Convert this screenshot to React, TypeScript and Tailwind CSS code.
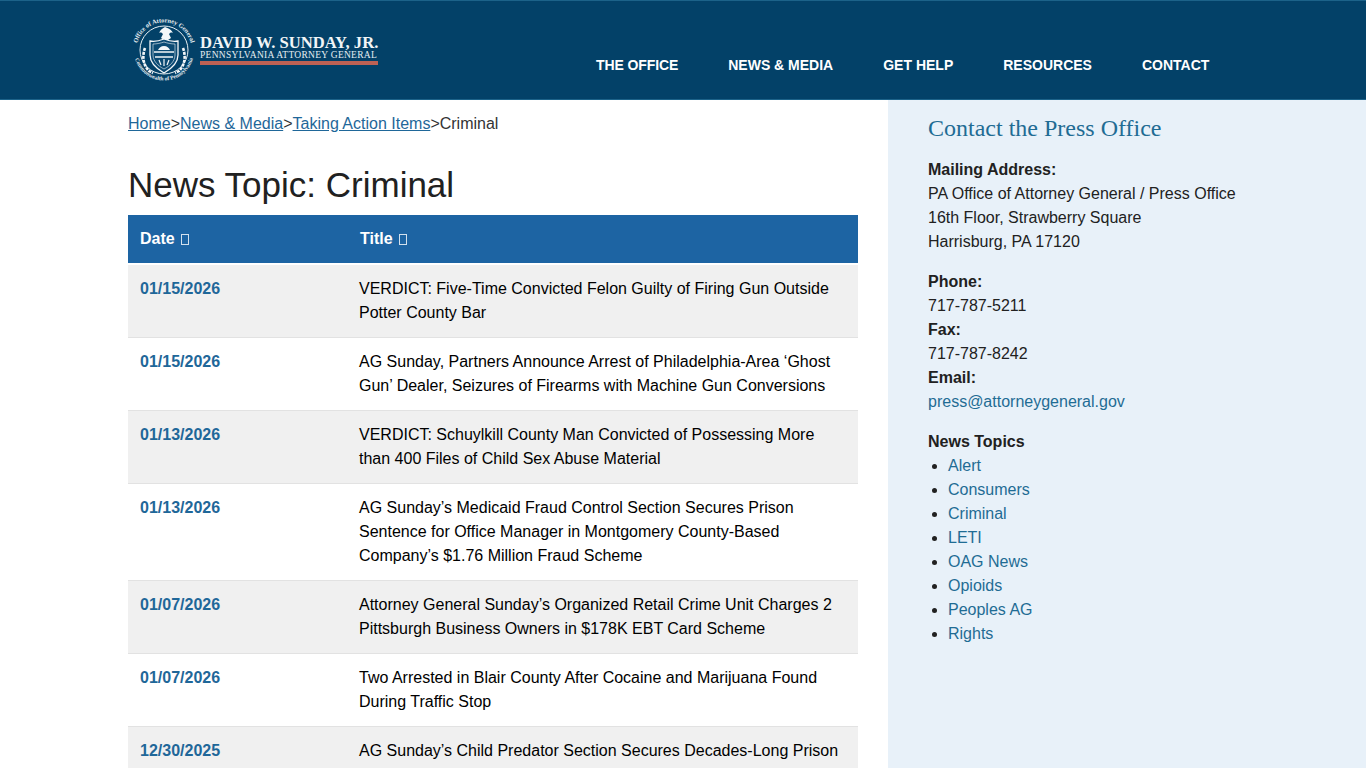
const navItems = ["THE OFFICE", "NEWS & MEDIA", "GET HELP", "RESOURCES", "CONTACT"];

const rows = [
  { date: "01/15/2026", title: ["VERDICT: Five-Time Convicted Felon Guilty of Firing Gun Outside", "Potter County Bar"] },
  { date: "01/15/2026", title: ["AG Sunday, Partners Announce Arrest of Philadelphia-Area ‘Ghost", "Gun’ Dealer, Seizures of Firearms with Machine Gun Conversions"] },
  { date: "01/13/2026", title: ["VERDICT: Schuylkill County Man Convicted of Possessing More", "than 400 Files of Child Sex Abuse Material"] },
  { date: "01/13/2026", title: ["AG Sunday’s Medicaid Fraud Control Section Secures Prison", "Sentence for Office Manager in Montgomery County-Based", "Company’s $1.76 Million Fraud Scheme"] },
  { date: "01/07/2026", title: ["Attorney General Sunday’s Organized Retail Crime Unit Charges 2", "Pittsburgh Business Owners in $178K EBT Card Scheme"] },
  { date: "01/07/2026", title: ["Two Arrested in Blair County After Cocaine and Marijuana Found", "During Traffic Stop"] },
  { date: "12/30/2025", title: ["AG Sunday’s Child Predator Section Secures Decades-Long Prison"] },
];

const topics = ["Alert", "Consumers", "Criminal", "LETI", "OAG News", "Opioids", "Peoples AG", "Rights"];

const Seal = () => (
  <svg width="64" height="64" viewBox="0 0 64 64" fill="none" className="shrink-0">
    <defs>
      <path id="sealTop" d="M5 38 A27.5 27.5 0 1 1 59 38" />
      <path id="sealBottom" d="M2.5 39 A30 30 0 0 0 61.5 39" />
    </defs>
    <text fontSize="6.4" fontWeight="700" fill="#e6eef2" fontFamily="'Liberation Serif', serif">
      <textPath href="#sealTop" startOffset="50%" textAnchor="middle">Office of Attorney General</textPath>
    </text>
    <text fontSize="5.6" fontWeight="700" fill="#e6eef2" fontFamily="'Liberation Serif', serif">
      <textPath href="#sealBottom" startOffset="50%" textAnchor="middle">Commonwealth of Pennsylvania</textPath>
    </text>
    <circle cx="32" cy="33" r="24" stroke="#e6eef2" strokeWidth="1" />
    {/* eagle */}
    <path d="M33 10c-2 1-5 3-6 6 2-1 3 0 4 1l-2 4 3 2h4l3-2-2-4c1-1 2-2 4-1-1-3-5-5-8-6z" fill="#f4f7f9" />
    {/* shield */}
    <path d="M18 24c5 1 9 0 14-2 5 2 9 3 14 2v14c0 8-7 14-14 18-7-4-14-10-14-18V24z" fill="#0b4a73" stroke="#f4f7f9" strokeWidth="1.3" />
    <path d="M21 27c4 0 8-1 11-2 3 1 7 2 11 2v11c0 6-5 11-11 14-6-3-11-8-11-14V27z" stroke="#f4f7f9" strokeWidth="0.6" />
    <path d="M26 33c1-2 3-4 6-4s5 2 6 4z" fill="#f4f7f9" />
    <path d="M22 35h20M23 40h18" stroke="#f4f7f9" strokeWidth="1.5" />
    <path d="M27 43l2 5M37 43l-2 5M32 42v7" stroke="#f4f7f9" strokeWidth="1.2" />
    {/* laurels */}
    <path d="M13 31c-3 8-2 17 4 23l4 2M51 31c3 8 2 17-4 23l-4 2" stroke="#f4f7f9" strokeWidth="2.6" strokeDasharray="3 1" />
  </svg>
);

const Tofu = () => (
  <span className="ml-[6px] inline-block w-[8px] h-[11px] border border-white/80 align-[-1px]" />
);

export default function App() {
  return (
    <div className="h-[768px] overflow-hidden bg-white text-[16px] leading-6 text-[#212121] font-['Liberation_Sans',Arial,sans-serif]">
      <header className="h-[100px] bg-[#034168] border-t border-b border-[#1c6289] pl-[128px] flex">
        <div className="w-[468px] flex items-start pt-[16px] pl-[4px] gap-[4px]">
          <Seal />
          <div className="w-[178px] pt-[17px] text-white font-['Liberation_Serif',serif] whitespace-nowrap">
            <div className="text-[16.6px] leading-[18px] font-bold text-[#f1f5f7]">DAVID W. SUNDAY, JR.</div>
            <div className="-mt-[2px] text-[9.5px] leading-[10px] tracking-[0.28px] text-[#e6eef2]">PENNSYLVANIA ATTORNEY GENERAL</div>
            <div className="h-[4px] mt-[1px] bg-[#bd6154]" />
          </div>
        </div>
        <nav className="flex gap-[50px] pt-[51px] text-[14px] leading-[26px] font-bold text-white">
          {navItems.map((item, i) => (
            <a key={item} className={i === 0 ? "whitespace-nowrap tracking-[-0.1px]" : "whitespace-nowrap"}>{item}</a>
          ))}
        </nav>
      </header>
      <div className="flex h-[668px]">
        <main className="w-[888px] pl-[128px] pr-[30px] pt-[12px]">
          <div className="text-[#333]">
            <a className="text-[#1f6799] underline">Home</a>&gt;
            <a className="text-[#1f6799] underline">News &amp; Media</a>&gt;
            <a className="text-[#1f6799] underline">Taking Action Items</a>&gt;Criminal
          </div>
          <h1 className="mt-[27px] text-[35px] leading-[44px] font-normal">News Topic: Criminal</h1>
          <div className="mt-[8px] mb-[2px] h-[48px] bg-[#1d64a3] flex items-center text-white font-bold">
            <div className="w-[232px] pl-[12px]">Date<Tofu /></div>
            <div>Title<Tofu /></div>
          </div>
          {rows.map((row, i) => (
            <div key={i} className={`flex py-[12px] border-b border-[#e2e2e2] ${i % 2 === 0 ? "bg-[#f0f0f0]" : "bg-white"}`}>
              <div className="w-[231px] pl-[12px] font-bold text-[#1f6799]">{row.date}</div>
              <div className="text-black">
                {row.title.map((line) => (
                  <div key={line} className="whitespace-nowrap">{line}</div>
                ))}
              </div>
            </div>
          ))}
        </main>
        <aside className="flex-1 bg-[#e8f1f9] pl-[40px]">
          <h2 className="mt-[12px] text-[24px] leading-[32px] font-normal text-[#1f6c94] font-['Liberation_Serif',serif]">Contact the Press Office</h2>
          <div className="mt-[14px]">
            <div className="font-bold">Mailing Address:</div>
            <div>PA Office of Attorney General / Press Office</div>
            <div>16th Floor, Strawberry Square</div>
            <div>Harrisburg, PA 17120</div>
          </div>
          <div className="mt-[16px]">
            <div className="font-bold">Phone:</div>
            <div>717-787-5211</div>
            <div className="font-bold">Fax:</div>
            <div>717-787-8242</div>
            <div className="font-bold">Email:</div>
            <a className="text-[#1f6c94]">press@attorneygeneral.gov</a>
          </div>
          <div className="mt-[16px] font-bold">News Topics</div>
          <ul className="list-disc pl-[20px]">
            {topics.map((t) => (
              <li key={t} className="text-[#1f6c94] marker:text-[#212121]">{t}</li>
            ))}
          </ul>
        </aside>
      </div>
    </div>
  );
}
